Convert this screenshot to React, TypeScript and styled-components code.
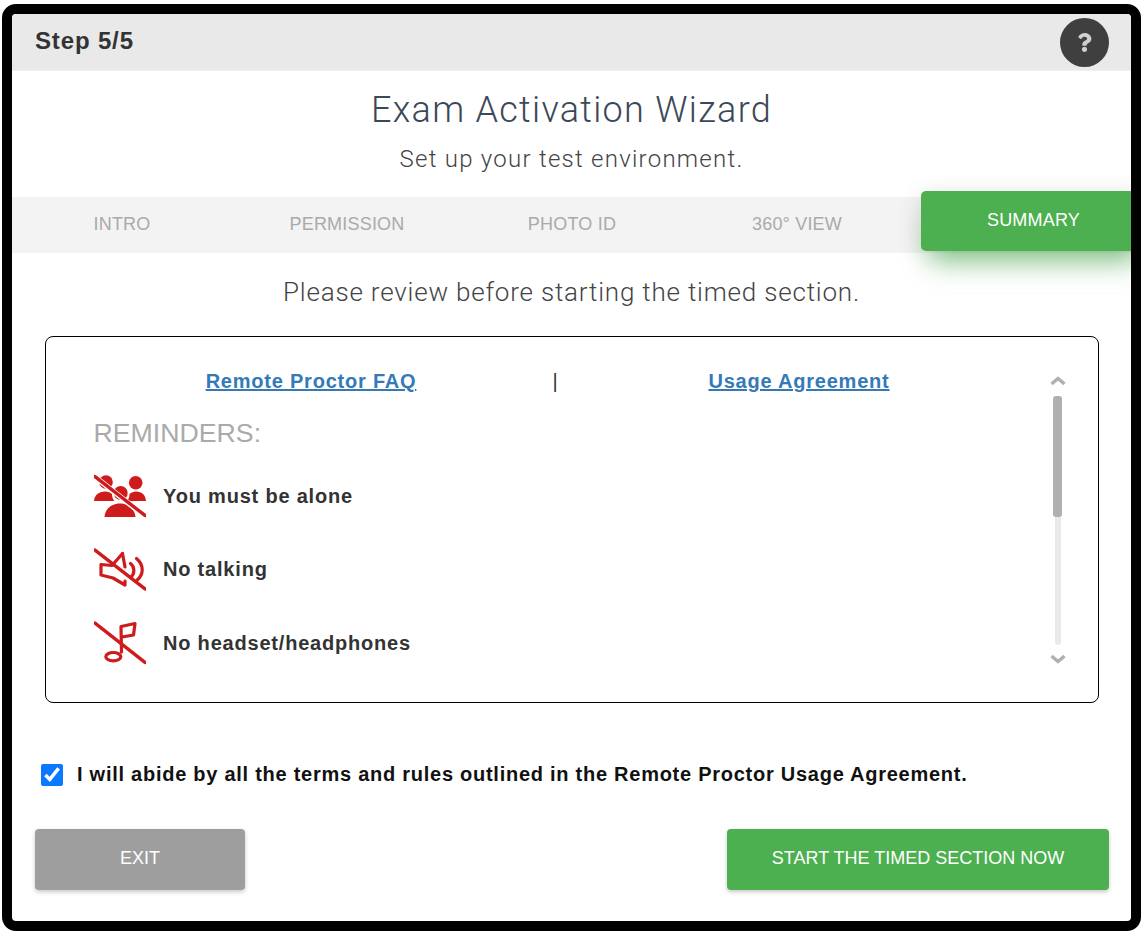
import React from "react";
import styled, { createGlobalStyle } from "styled-components";
import { FaQuestion } from "react-icons/fa";

const tabs = ["INTRO", "PERMISSION", "PHOTO ID", "360° VIEW", "SUMMARY"];

const App: React.FC = () => {
  return (
    <>
      <GlobalStyle />
      <Frame>
        <Header>
          <StepLabel>Step 5/5</StepLabel>
          <HelpButton>
            <FaQuestion />
          </HelpButton>
        </Header>
        <Title>Exam Activation Wizard</Title>
        <Subtitle>Set up your test environment.</Subtitle>
        <TabBar>
          {tabs.map((tab) => (
            <Tab key={tab} active={tab === "SUMMARY"}>
              {tab}
            </Tab>
          ))}
        </TabBar>
        <Review>Please review before starting the timed section.</Review>
        <InfoBox>
          <BoxContent>
            <Links>
              <DocLink href="#">Remote Proctor FAQ</DocLink>
              <Divider>|</Divider>
              <DocLink href="#">Usage Agreement</DocLink>
            </Links>
            <Reminders>REMINDERS:</Reminders>
            <ReminderList>
              <ReminderRow>
                <AloneIcon />
                <ReminderText>You must be alone</ReminderText>
              </ReminderRow>
              <ReminderRow>
                <TalkIcon />
                <ReminderText>No talking</ReminderText>
              </ReminderRow>
              <ReminderRow>
                <MusicIcon />
                <ReminderText>No headset/headphones</ReminderText>
              </ReminderRow>
            </ReminderList>
          </BoxContent>
          <Scrollbar>
            <Arrow viewBox="0 0 18 10">
              <path d="M2.5 8 L9 2.5 L15.5 8" />
            </Arrow>
            <Track>
              <Thumb />
            </Track>
            <Arrow viewBox="0 0 18 10">
              <path d="M2.5 2 L9 7.5 L15.5 2" />
            </Arrow>
          </Scrollbar>
        </InfoBox>
        <AgreeRow>
          <AgreeCheck type="checkbox" defaultChecked />
          <AgreeText>
            I will abide by all the terms and rules outlined in the Remote Proctor Usage Agreement.
          </AgreeText>
        </AgreeRow>
        <Footer>
          <ActionButton wide={210} color="#9e9e9e">
            EXIT
          </ActionButton>
          <ActionButton wide={382} color="#4caf50">
            START THE TIMED SECTION NOW
          </ActionButton>
        </Footer>
      </Frame>
    </>
  );
};

export default App;

const AloneIcon = () => (
  <IconSvg viewBox="0 0 52 44">
    <circle cx="12" cy="8" r="6.8" />
    <circle cx="41.7" cy="8.8" r="6.8" />
    <circle cx="26.7" cy="19" r="7" />
    <path d="M0 27 C0.5 21 5 17.5 11 17.5 C14 17.5 16.5 18.5 18 20 C18 23 19 25.5 20.5 27 Z" />
    <path d="M35.5 20 C37.5 18.5 39.5 17.5 42 17.5 C48 17.5 51.5 21 52 27 L33 27 C34.5 25.5 35.5 23 35.5 20 Z" />
    <path d="M10.5 43 C11 34.5 18 29.5 26 29.5 C34 29.5 40.5 34.5 41.5 43 Z" />
    <path className="slash-gap" d="M-2 0.5 L54 44.5" />
    <path className="slash" d="M1 2.5 L51 41.5" />
  </IconSvg>
);

const TalkIcon = () => (
  <IconSvg viewBox="0 0 52 44">
    <g className="line">
      <path d="M28.5 5.5 L18 17.5 L7 16.5 L7 27 L19 30 L31 37 L31 33" />
      <path d="M28.5 5.5 L31 19" />
      <path d="M36.5 15.5 C41 19 41 26 36.5 29.5" />
      <path d="M42.5 10.5 C50 17 50 26 43.2 32" />
    </g>
    <path className="slash" d="M1 2 L51 41" />
  </IconSvg>
);

const MusicIcon = () => (
  <IconSvg viewBox="0 0 52 44">
    <g className="line">
      <path d="M27.5 31 L27 5.5 L41 2.5 L39.5 14 L28 16" />
      <ellipse cx="19.3" cy="35.7" rx="7.5" ry="4.2" />
    </g>
    <path className="slash" d="M1 2 L51 41.5" />
  </IconSvg>
);

const GlobalStyle = createGlobalStyle`
  body {
    margin: 0;
    background: #ffffff;
    font-family: "Liberation Sans", Arial, sans-serif;
  }
`;

const Frame = styled.div`
  box-sizing: border-box;
  width: 1139px;
  height: 927px;
  margin: 4px 0 0 2px;
  border: 10px solid #000000;
  border-radius: 14px;
  overflow: hidden;
  background: #ffffff;
`;

const Header = styled.div`
  box-sizing: border-box;
  display: flex;
  align-items: center;
  justify-content: space-between;
  height: 57px;
  padding: 0 22px 2px 23px;
  border-bottom: 1px solid #f0f0f0;
  background: #e9e9e9;
`;

const StepLabel = styled.div`
  font-size: 24px;
  font-weight: 700;
  letter-spacing: 0.85px;
  color: #333333;
`;

const HelpButton = styled.div`
  display: flex;
  align-items: center;
  justify-content: center;
  width: 49px;
  height: 49px;
  margin-top: 2px;
  border-radius: 50%;
  background: #3f3f3f;
  color: #d0d0d0;
  font-size: 19px;
`;

const Title = styled.h1`
  margin: 15px 0 0;
  font-family: Roboto, sans-serif;
  font-size: 36px;
  font-weight: 300;
  line-height: 48px;
  letter-spacing: 1.3px;
  text-align: center;
  color: #3c4858;
`;

const Subtitle = styled.div`
  margin-top: 9px;
  font-family: Roboto, sans-serif;
  font-size: 24px;
  font-weight: 300;
  line-height: 32px;
  letter-spacing: 1.25px;
  text-align: center;
  color: #444444;
`;

const TabBar = styled.div`
  display: grid;
  grid-template-columns: repeat(5, 225px);
  height: 56px;
  margin: 22px 0 0 -2.5px;
  background: #f3f3f3;
`;

const Tab = styled.div<{ active: boolean }>`
  display: flex;
  align-items: center;
  justify-content: center;
  font-size: 18px;
  letter-spacing: 0.2px;
  color: ${(props) => (props.active ? "#ffffff" : "#aaaaaa")};
  ${(props) =>
    props.active
      ? `
    height: 60px;
    padding: 0 0 2px 1px;
    box-sizing: border-box;
    border-radius: 5px;
    background: #4caf50;
    transform: translate(11px, -6px);
    box-shadow: 0 20px 28px -10px rgba(76, 175, 80, 0.65), 0 4px 25px 0 rgba(0, 0, 0, 0.12);
  `
      : `
    padding-bottom: 5px;
  `}
`;

const Review = styled.div`
  margin-top: 23px;
  font-family: Roboto, sans-serif;
  font-size: 26px;
  font-weight: 300;
  line-height: 32px;
  letter-spacing: 0.8px;
  text-align: center;
  color: #444444;
`;

const InfoBox = styled.div`
  box-sizing: border-box;
  display: flex;
  justify-content: space-between;
  width: 1054px;
  height: 367px;
  margin: 28px 0 0 33px;
  border: 1px solid #000000;
  border-radius: 8px;
`;

const BoxContent = styled.div`
  display: flex;
  flex-direction: column;
  padding: 33px 0 0 48px;
`;

const Links = styled.div`
  display: grid;
  grid-template-columns: repeat(3, 244px);
  padding-left: 95px;
  text-align: center;
`;

const DocLink = styled.a`
  font-size: 20px;
  font-weight: 700;
  letter-spacing: 0.78px;
  white-space: nowrap;
  color: #337ab7;
`;

const Divider = styled.span`
  font-size: 20px;
  color: #333333;
`;

const Reminders = styled.div`
  margin: 25px 0 0 -0.5px;
  font-size: 26.7px;
  line-height: 30px;
  color: #aaaaaa;
`;

const ReminderList = styled.div`
  display: flex;
  flex-direction: column;
  gap: 29.6px;
  margin-top: 26.2px;
`;

const ReminderRow = styled.div`
  display: flex;
  align-items: center;
  gap: 17px;
  height: 44px;
`;

const ReminderText = styled.div`
  font-size: 20px;
  font-weight: 700;
  letter-spacing: 0.8px;
  color: #333333;
`;

const IconSvg = styled.svg`
  width: 52px;
  height: 44px;
  fill: #ce1c1c;
  .slash {
    fill: none;
    stroke: #ce1c1c;
    stroke-width: 3.4;
    stroke-linecap: round;
  }
  .slash-gap {
    fill: none;
    stroke: #ffffff;
    stroke-width: 5.4;
  }
  .line {
    fill: none;
    stroke: #ce1c1c;
    stroke-width: 3.2;
    stroke-linecap: round;
    stroke-linejoin: round;
  }
`;

const Scrollbar = styled.div`
  display: flex;
  flex-direction: column;
  align-items: center;
  width: 18px;
  margin: 39px 31px 0 0;
`;

const Arrow = styled.svg`
  width: 18px;
  height: 10px;
  fill: none;
  stroke: #b0b0b0;
  stroke-width: 3.4;
`;

const Track = styled.div`
  position: relative;
  width: 6px;
  height: 249px;
  margin: 10px 0 9px;
  border-radius: 3px;
  background: #e9e9e9;
`;

const Thumb = styled.div`
  position: absolute;
  top: 0;
  left: -2px;
  width: 9px;
  height: 121px;
  border-radius: 3px;
  background: #b0b0b0;
`;

const AgreeRow = styled.div`
  display: flex;
  align-items: center;
  gap: 14px;
  margin: 60px 0 0 29px;
`;

const AgreeCheck = styled.input`
  width: 22px;
  height: 22px;
  margin: 0;
  accent-color: #0a78ff;
`;

const AgreeText = styled.div`
  font-size: 20px;
  font-weight: 700;
  letter-spacing: 0.74px;
  white-space: nowrap;
  color: #111111;
`;

const Footer = styled.div`
  display: flex;
  justify-content: space-between;
  margin: 43px 22px 0 23px;
`;

const ActionButton = styled.div<{ wide: number; color: string }>`
  box-sizing: border-box;
  display: flex;
  align-items: center;
  justify-content: center;
  width: ${(props) => props.wide}px;
  height: 61px;
  padding-bottom: 2px;
  border-radius: 4px;
  background: ${(props) => props.color};
  box-shadow: 0 2px 4px rgba(0, 0, 0, 0.22);
  font-size: 18px;
  color: #ffffff;
`;
